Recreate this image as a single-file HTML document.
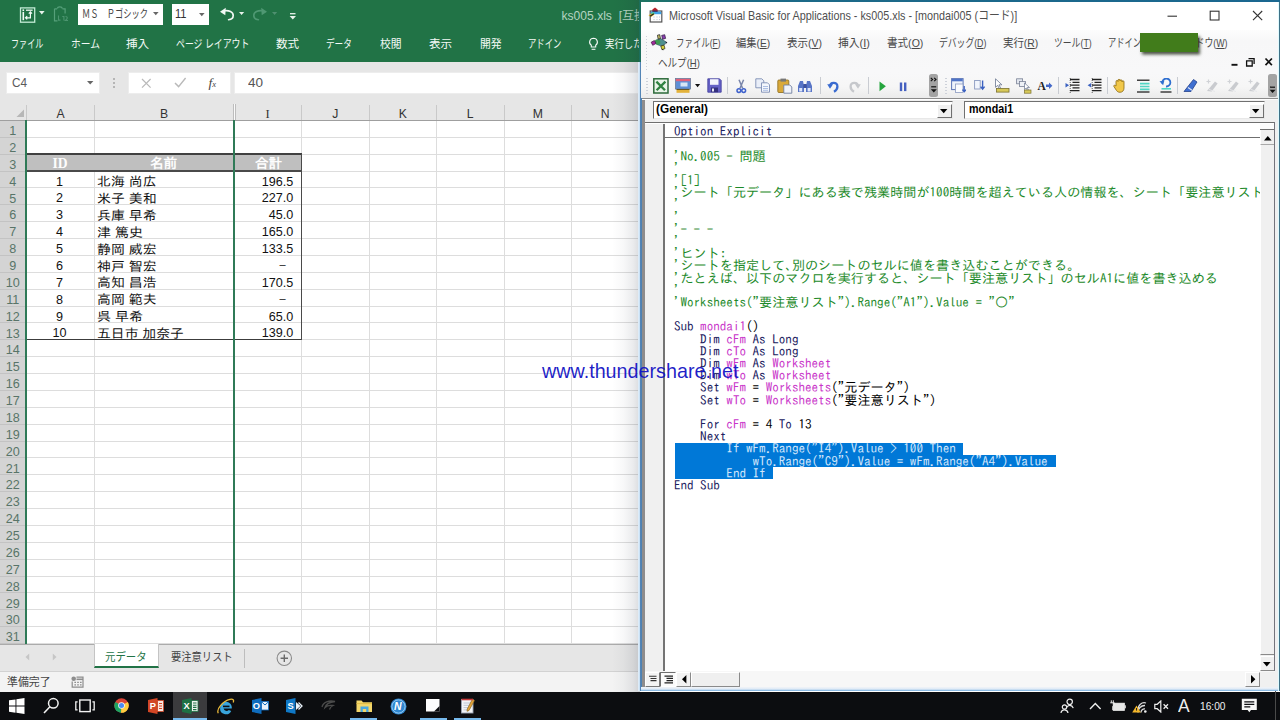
<!DOCTYPE html>
<html lang="ja">
<head>
<meta charset="utf-8">
<title>ks005.xls - Excel / Microsoft Visual Basic for Applications</title>
<style>
html,body{margin:0;padding:0;background:#fff;}
#s{position:relative;width:1280px;height:720px;overflow:hidden;background:#fff;font-family:'Liberation Sans','Noto Sans CJK JP',sans-serif;}
.a{position:absolute;display:block;box-sizing:border-box;}
.t{white-space:pre;}
.cl{position:absolute;left:673.9px;white-space:pre;font-family:'IPAGothic','Liberation Mono',monospace;font-size:13.12px;line-height:12.2px;height:12.2px;color:#000;}
.k{color:#20205e}.i{color:#c935c9}.c{color:#1d8a2a}.s{color:#d2e6fb}
u{text-decoration:underline;text-underline-offset:1px;}
</style>
</head>
<body>
<div id="s">
<!-- Excel window -->
<div class="a" style="left:0px;top:0px;width:640px;height:62px;background:#217346;"></div>
<svg class="a" style="left:19px;top:6.5px;" width="17" height="17" viewBox="0 0 17 17"><rect x="1.500" y=".9" width="14.200" height="14.300" fill="none" stroke="#c4ecd6" stroke-width="1.300"/><rect x="3.500" y="2.400" width="1.600" height="1.600" fill="#f2fbf6"/><rect x="3.500" y="4.900" width="1.600" height="8.300" fill="#f2fbf6"/><path d="M7 3.200h6.600" stroke="#f2fbf6" stroke-width="1.300"/><path d="M11.400 5v5.800H6.600M9.800 6.600l1.600-1.700 1.600 1.700M8.200 9.200l-1.700 1.600 1.700 1.600" stroke="#f2fbf6" stroke-width="1.200" fill="none"/></svg>
<svg class="a" style="left:39px;top:11px;" width="6" height="4" viewBox="0 0 6 4"><path d="M0 0h5.6L2.8 3.4z" fill="#e9f3ec"/></svg>
<svg class="a" style="left:52.5px;top:6px;" width="16" height="16" viewBox="0 0 16 16"><path d="M1.500 2.800V14.800h3M1.500 2.800h2.600M4.500 2.600c0-2.400 4.600-2.400 4.600 0M9.500 2.800h2.600V7.500" fill="none" stroke="#56a07a" stroke-width="1.200"/><path d="M5.500 9.500v4.600h2M9.300 10.500h1.600v4M12.500 10.500c2.400 0 2.400 2 0 4h2.500" fill="none" stroke="#4c9570" stroke-width="1.100"/></svg>
<div class="a" style="left:78px;top:3.5px;width:85px;height:21.5px;background:#fff;"></div>
<span class="a t" style="top:7.03px;font-size:11.5px;line-height:14.95px;color:#444;font-family:'Liberation Sans','Noto Sans CJK JP',sans-serif;left:82px;transform-origin:0 50%;transform:scaleX(0.7174);">ＭＳ　Ｐゴシック</span>
<svg class="a" style="left:153.3px;top:11.8px;" width="6" height="4" viewBox="0 0 6 4"><path d="M0 0h5.6L2.8 3.2z" fill="#666"/></svg>
<div class="a" style="left:172px;top:3.5px;width:37px;height:21.5px;background:#fff;"></div>
<span class="a t" style="top:6.38px;font-size:12.5px;line-height:16.25px;color:#333;font-family:'Liberation Sans','Noto Sans CJK JP',sans-serif;left:175px;transform-origin:0 50%;transform:scaleX(0.8846);">11</span>
<svg class="a" style="left:198.5px;top:12.5px;" width="6" height="4" viewBox="0 0 6 4"><path d="M0 0h5.6L2.8 3.2z" fill="#666"/></svg>
<svg class="a" style="left:219px;top:6px;" width="16" height="16" viewBox="0 0 16 16"><path d="M5.600 4.700C9.800 4.200 14.200 5.800 14.200 9.500C14.200 12 12.200 13.500 9.600 13.700" fill="none" stroke="#f2f8f4" stroke-width="1.650" stroke-linecap="round"/><path d="M1 5.700L6.800 1.700L6.300 9.200z" fill="#f2f8f4"/></svg>
<svg class="a" style="left:239px;top:11.5px;" width="6" height="4" viewBox="0 0 6 4"><path d="M0 0h5.200L2.600 3z" fill="#e9f3ec"/></svg>
<svg class="a" style="left:252px;top:6px;" width="16" height="16" viewBox="0 0 16 16"><path d="M10.400 4.700C6.200 4.200 1.800 5.800 1.800 9.500C1.800 12 3.800 13.500 6.400 13.700" fill="none" stroke="#4f9873" stroke-width="1.650" stroke-linecap="round"/><path d="M15 5.700L9.200 1.700L9.700 9.200z" fill="#4f9873"/></svg>
<svg class="a" style="left:272px;top:11.5px;" width="6" height="4" viewBox="0 0 6 4"><path d="M0 0h5.200L2.600 3z" fill="#4f9070"/></svg>
<svg class="a" style="left:288.5px;top:12.6px;" width="8" height="8" viewBox="0 0 8 8"><path d="M1 0.700h5.500" stroke="#e9f3ec" stroke-width="1.300"/><path d="M0.600 3h6.400L3.800 6.600z" fill="#e9f3ec"/></svg>
<div class="a" style="left:555px;top:4px;width:85px;height:26px;overflow:hidden">
<span class="a t" style="top:5.13px;font-size:12.1px;line-height:15.73px;color:#b4d3c1;font-family:'Liberation Sans','Noto Sans CJK JP',sans-serif;left:6.5px;transform-origin:0 50%;">ks005.xls  [互換モード]  -  Excel</span>
</div>
<span class="a t" style="top:36.06px;font-size:11.6px;line-height:15.08px;color:#f4faf6;font-family:'Liberation Sans','Noto Sans CJK JP',sans-serif;left:11px;transform-origin:0 50%;transform:scaleX(0.6957);">ファイル</span>
<span class="a t" style="top:36.06px;font-size:11.6px;line-height:15.08px;color:#f4faf6;font-family:'Liberation Sans','Noto Sans CJK JP',sans-serif;left:71px;transform-origin:0 50%;transform:scaleX(0.8382);">ホーム</span>
<span class="a t" style="top:36.06px;font-size:11.6px;line-height:15.08px;color:#f4faf6;font-family:'Liberation Sans','Noto Sans CJK JP',sans-serif;left:126px;transform-origin:0 50%;transform:scaleX(1.0);">挿入</span>
<span class="a t" style="top:36.06px;font-size:11.6px;line-height:15.08px;color:#f4faf6;font-family:'Liberation Sans','Noto Sans CJK JP',sans-serif;left:176px;transform-origin:0 50%;transform:scaleX(0.7656);">ページ レイアウト</span>
<span class="a t" style="top:36.06px;font-size:11.6px;line-height:15.08px;color:#f4faf6;font-family:'Liberation Sans','Noto Sans CJK JP',sans-serif;left:276px;transform-origin:0 50%;transform:scaleX(1.0);">数式</span>
<span class="a t" style="top:36.06px;font-size:11.6px;line-height:15.08px;color:#f4faf6;font-family:'Liberation Sans','Noto Sans CJK JP',sans-serif;left:326px;transform-origin:0 50%;transform:scaleX(0.7429);">データ</span>
<span class="a t" style="top:36.06px;font-size:11.6px;line-height:15.08px;color:#f4faf6;font-family:'Liberation Sans','Noto Sans CJK JP',sans-serif;left:379.5px;transform-origin:0 50%;transform:scaleX(0.9348);">校閲</span>
<span class="a t" style="top:36.06px;font-size:11.6px;line-height:15.08px;color:#f4faf6;font-family:'Liberation Sans','Noto Sans CJK JP',sans-serif;left:429px;transform-origin:0 50%;transform:scaleX(1.0);">表示</span>
<span class="a t" style="top:36.06px;font-size:11.6px;line-height:15.08px;color:#f4faf6;font-family:'Liberation Sans','Noto Sans CJK JP',sans-serif;left:479.5px;transform-origin:0 50%;transform:scaleX(0.9348);">開発</span>
<span class="a t" style="top:36.06px;font-size:11.6px;line-height:15.08px;color:#f4faf6;font-family:'Liberation Sans','Noto Sans CJK JP',sans-serif;left:528px;transform-origin:0 50%;transform:scaleX(0.7174);">アドイン</span>
<svg class="a" style="left:587.5px;top:37px;" width="11" height="14" viewBox="0 0 11 14"><path d="M5.5 1.2a3.9 3.9 0 0 0-2.2 7.1v1.7h4.4V8.3A3.9 3.9 0 0 0 5.500 1.2z" fill="none" stroke="#f4faf6" stroke-width="1.1"/><path d="M3.6 12.3h3.8" stroke="#f4faf6" stroke-width="1.1"/></svg>
<div class="a" style="left:600px;top:32px;width:40px;height:24px;overflow:hidden">
<span class="a t" style="top:4.06px;font-size:11.6px;line-height:15.08px;color:#f4faf6;font-family:'Liberation Sans','Noto Sans CJK JP',sans-serif;left:5px;transform-origin:0 50%;transform:scaleX(0.8108);">実行したい作業を入力してください</span>
</div>
<div class="a" style="left:0px;top:62px;width:640px;height:58.6px;background:#e6e6e6;"></div>
<div class="a" style="left:5.5px;top:71.6px;width:94px;height:22.9px;background:#fff;box-shadow:inset 0 0 0 1px #ededed;"></div>
<span class="a t" style="top:75.41px;font-size:12.6px;line-height:16.38px;color:#5a5a5a;font-family:'Liberation Sans','Noto Sans CJK JP',sans-serif;left:11.5px;transform-origin:0 50%;transform:scaleX(0.9375);">C4</span>
<svg class="a" style="left:87px;top:81px;" width="7" height="5" viewBox="0 0 7 5"><path d="M0 0h6.4L3.2 3.6z" fill="#666"/></svg>
<div class="a" style="left:113.3px;top:78px;width:1.5px;height:1.5px;background:#b5b5b5;"></div>
<div class="a" style="left:113.3px;top:82px;width:1.5px;height:1.5px;background:#b5b5b5;"></div>
<div class="a" style="left:113.3px;top:86px;width:1.5px;height:1.5px;background:#b5b5b5;"></div>
<div class="a" style="left:128px;top:71.6px;width:103px;height:22.9px;background:#fff;box-shadow:inset 0 0 0 1px #ededed;"></div>
<svg class="a" style="left:141px;top:77.5px;" width="11" height="11" viewBox="0 0 11 11"><path d="M1 1l8.6 8.6M9.6 1L1 9.600" stroke="#b9b9b9" stroke-width="1.2" fill="none"/></svg>
<svg class="a" style="left:174px;top:77px;" width="13" height="11" viewBox="0 0 13 11"><path d="M1 6l3.600 3.6L11.6 1" stroke="#b9b9b9" stroke-width="1.4" fill="none"/></svg>
<span class="a t" style="top:73.82px;font-size:13.5px;line-height:17.55px;color:#444;font-family:'Liberation Serif','Noto Serif CJK JP',serif;left:208.5px;transform-origin:0 50%;"><i>f</i><span style="font-size:8.5px"><i>x</i></span></span>
<div class="a" style="left:234px;top:71.6px;width:410px;height:22.9px;background:#fff;box-shadow:inset 0 0 0 1px #ededed;"></div>
<span class="a t" style="top:75.11px;font-size:12.6px;line-height:16.38px;color:#555;font-family:'Liberation Sans','Noto Sans CJK JP',sans-serif;left:248px;transform-origin:0 50%;transform:scaleX(1.0714);">40</span>
<div class="a" style="left:0px;top:120.4px;width:640px;height:524.12px;background:#fff;"></div>
<span class="a t" style="top:106.67px;font-size:12.2px;line-height:15.86px;color:#333;font-family:'Liberation Sans','IPAGothic',sans-serif;left:60.7px;transform-origin:50% 50%;transform:translateX(-50%);">A</span>
<div class="a" style="left:93.9px;top:104.5px;width:1px;height:16px;background:#c9c9c9;"></div>
<span class="a t" style="top:106.67px;font-size:12.2px;line-height:15.86px;color:#333;font-family:'Liberation Sans','IPAGothic',sans-serif;left:164.1px;transform-origin:50% 50%;transform:translateX(-50%);">B</span>
<span class="a t" style="top:106.41px;font-size:12.6px;line-height:16.38px;color:#333;font-family:'Liberation Serif','Noto Serif CJK JP',serif;left:267.6px;transform-origin:50% 50%;transform:translateX(-50%);">I</span>
<div class="a" style="left:301.0px;top:104.5px;width:1px;height:16px;background:#c9c9c9;"></div>
<span class="a t" style="top:106.67px;font-size:12.2px;line-height:15.86px;color:#333;font-family:'Liberation Sans','IPAGothic',sans-serif;left:335.2px;transform-origin:50% 50%;transform:translateX(-50%);">J</span>
<div class="a" style="left:368.5px;top:104.5px;width:1px;height:16px;background:#c9c9c9;"></div>
<span class="a t" style="top:106.67px;font-size:12.2px;line-height:15.86px;color:#333;font-family:'Liberation Sans','IPAGothic',sans-serif;left:402.8px;transform-origin:50% 50%;transform:translateX(-50%);">K</span>
<div class="a" style="left:436.0px;top:104.5px;width:1px;height:16px;background:#c9c9c9;"></div>
<span class="a t" style="top:106.67px;font-size:12.2px;line-height:15.86px;color:#333;font-family:'Liberation Sans','IPAGothic',sans-serif;left:470.2px;transform-origin:50% 50%;transform:translateX(-50%);">L</span>
<div class="a" style="left:503.5px;top:104.5px;width:1px;height:16px;background:#c9c9c9;"></div>
<span class="a t" style="top:106.67px;font-size:12.2px;line-height:15.86px;color:#333;font-family:'Liberation Sans','IPAGothic',sans-serif;left:537.8px;transform-origin:50% 50%;transform:translateX(-50%);">M</span>
<div class="a" style="left:571.0px;top:104.5px;width:1px;height:16px;background:#c9c9c9;"></div>
<span class="a t" style="top:106.67px;font-size:12.2px;line-height:15.86px;color:#333;font-family:'Liberation Sans','IPAGothic',sans-serif;left:605.2px;transform-origin:50% 50%;transform:translateX(-50%);">N</span>
<div class="a" style="left:638.5px;top:104.5px;width:1px;height:16px;background:#c9c9c9;"></div>
<div class="a" style="left:26px;top:104.5px;width:1px;height:16px;background:#c9c9c9;"></div>
<div class="a" style="left:232.5px;top:104px;width:3px;height:16.4px;background:#fafafa;border-left:1px solid #bdbdbd;border-right:1px solid #bdbdbd;"></div>
<svg class="a" style="left:15.5px;top:108.5px;" width="9" height="9" viewBox="0 0 9 9"><path d="M8 0.5V8H0.500z" fill="#b7b7b7"/></svg>
<div class="a" style="left:93.9px;top:120.4px;width:1px;height:523.12px;background:#dddddd;"></div>
<div class="a" style="left:301.0px;top:120.4px;width:1px;height:523.12px;background:#dddddd;"></div>
<div class="a" style="left:368.5px;top:120.4px;width:1px;height:523.12px;background:#dddddd;"></div>
<div class="a" style="left:436.0px;top:120.4px;width:1px;height:523.12px;background:#dddddd;"></div>
<div class="a" style="left:503.5px;top:120.4px;width:1px;height:523.12px;background:#dddddd;"></div>
<div class="a" style="left:571.0px;top:120.4px;width:1px;height:523.12px;background:#dddddd;"></div>
<div class="a" style="left:0px;top:120.4px;width:25.6px;height:523.73px;background:#d4d4d4;"></div>
<div class="a" style="left:25.6px;top:136.78px;width:615px;height:1px;background:#dddddd;"></div>
<div class="a" style="left:0px;top:136.78px;width:25.6px;height:1px;background:#c3c3c3;"></div>
<span class="a t" style="top:123.05px;font-size:12.6px;line-height:16.38px;color:#587468;font-family:'Liberation Sans','IPAGothic',sans-serif;left:12.8px;transform-origin:50% 50%;transform:translateX(-50%);">1</span>
<div class="a" style="left:25.6px;top:153.65px;width:615px;height:1px;background:#dddddd;"></div>
<div class="a" style="left:0px;top:153.65px;width:25.6px;height:1px;background:#c3c3c3;"></div>
<span class="a t" style="top:139.92px;font-size:12.6px;line-height:16.38px;color:#587468;font-family:'Liberation Sans','IPAGothic',sans-serif;left:12.8px;transform-origin:50% 50%;transform:translateX(-50%);">2</span>
<div class="a" style="left:25.6px;top:170.53px;width:615px;height:1px;background:#dddddd;"></div>
<div class="a" style="left:0px;top:170.53px;width:25.6px;height:1px;background:#c3c3c3;"></div>
<span class="a t" style="top:156.8px;font-size:12.6px;line-height:16.38px;color:#587468;font-family:'Liberation Sans','IPAGothic',sans-serif;left:12.8px;transform-origin:50% 50%;transform:translateX(-50%);">3</span>
<div class="a" style="left:25.6px;top:187.4px;width:615px;height:1px;background:#dddddd;"></div>
<div class="a" style="left:0px;top:187.4px;width:25.6px;height:1px;background:#c3c3c3;"></div>
<span class="a t" style="top:173.67px;font-size:12.6px;line-height:16.38px;color:#587468;font-family:'Liberation Sans','IPAGothic',sans-serif;left:12.8px;transform-origin:50% 50%;transform:translateX(-50%);">4</span>
<div class="a" style="left:25.6px;top:204.28px;width:615px;height:1px;background:#dddddd;"></div>
<div class="a" style="left:0px;top:204.28px;width:25.6px;height:1px;background:#c3c3c3;"></div>
<span class="a t" style="top:190.55px;font-size:12.6px;line-height:16.38px;color:#587468;font-family:'Liberation Sans','IPAGothic',sans-serif;left:12.8px;transform-origin:50% 50%;transform:translateX(-50%);">5</span>
<div class="a" style="left:25.6px;top:221.15px;width:615px;height:1px;background:#dddddd;"></div>
<div class="a" style="left:0px;top:221.15px;width:25.6px;height:1px;background:#c3c3c3;"></div>
<span class="a t" style="top:207.42px;font-size:12.6px;line-height:16.38px;color:#587468;font-family:'Liberation Sans','IPAGothic',sans-serif;left:12.8px;transform-origin:50% 50%;transform:translateX(-50%);">6</span>
<div class="a" style="left:25.6px;top:238.03px;width:615px;height:1px;background:#dddddd;"></div>
<div class="a" style="left:0px;top:238.03px;width:25.6px;height:1px;background:#c3c3c3;"></div>
<span class="a t" style="top:224.3px;font-size:12.6px;line-height:16.38px;color:#587468;font-family:'Liberation Sans','IPAGothic',sans-serif;left:12.8px;transform-origin:50% 50%;transform:translateX(-50%);">7</span>
<div class="a" style="left:25.6px;top:254.9px;width:615px;height:1px;background:#dddddd;"></div>
<div class="a" style="left:0px;top:254.9px;width:25.6px;height:1px;background:#c3c3c3;"></div>
<span class="a t" style="top:241.17px;font-size:12.6px;line-height:16.38px;color:#587468;font-family:'Liberation Sans','IPAGothic',sans-serif;left:12.8px;transform-origin:50% 50%;transform:translateX(-50%);">8</span>
<div class="a" style="left:25.6px;top:271.77px;width:615px;height:1px;background:#dddddd;"></div>
<div class="a" style="left:0px;top:271.77px;width:25.6px;height:1px;background:#c3c3c3;"></div>
<span class="a t" style="top:258.05px;font-size:12.6px;line-height:16.38px;color:#587468;font-family:'Liberation Sans','IPAGothic',sans-serif;left:12.8px;transform-origin:50% 50%;transform:translateX(-50%);">9</span>
<div class="a" style="left:25.6px;top:288.65px;width:615px;height:1px;background:#dddddd;"></div>
<div class="a" style="left:0px;top:288.65px;width:25.6px;height:1px;background:#c3c3c3;"></div>
<span class="a t" style="top:274.92px;font-size:12.6px;line-height:16.38px;color:#587468;font-family:'Liberation Sans','IPAGothic',sans-serif;left:12.8px;transform-origin:50% 50%;transform:translateX(-50%);">10</span>
<div class="a" style="left:25.6px;top:305.52px;width:615px;height:1px;background:#dddddd;"></div>
<div class="a" style="left:0px;top:305.52px;width:25.6px;height:1px;background:#c3c3c3;"></div>
<span class="a t" style="top:291.8px;font-size:12.6px;line-height:16.38px;color:#587468;font-family:'Liberation Sans','IPAGothic',sans-serif;left:12.8px;transform-origin:50% 50%;transform:translateX(-50%);">11</span>
<div class="a" style="left:25.6px;top:322.4px;width:615px;height:1px;background:#dddddd;"></div>
<div class="a" style="left:0px;top:322.4px;width:25.6px;height:1px;background:#c3c3c3;"></div>
<span class="a t" style="top:308.67px;font-size:12.6px;line-height:16.38px;color:#587468;font-family:'Liberation Sans','IPAGothic',sans-serif;left:12.8px;transform-origin:50% 50%;transform:translateX(-50%);">12</span>
<div class="a" style="left:25.6px;top:339.27px;width:615px;height:1px;background:#dddddd;"></div>
<div class="a" style="left:0px;top:339.27px;width:25.6px;height:1px;background:#c3c3c3;"></div>
<span class="a t" style="top:325.55px;font-size:12.6px;line-height:16.38px;color:#587468;font-family:'Liberation Sans','IPAGothic',sans-serif;left:12.8px;transform-origin:50% 50%;transform:translateX(-50%);">13</span>
<div class="a" style="left:25.6px;top:356.15px;width:615px;height:1px;background:#dddddd;"></div>
<div class="a" style="left:0px;top:356.15px;width:25.6px;height:1px;background:#c3c3c3;"></div>
<span class="a t" style="top:342.42px;font-size:12.6px;line-height:16.38px;color:#587468;font-family:'Liberation Sans','IPAGothic',sans-serif;left:12.8px;transform-origin:50% 50%;transform:translateX(-50%);">14</span>
<div class="a" style="left:25.6px;top:373.02px;width:615px;height:1px;background:#dddddd;"></div>
<div class="a" style="left:0px;top:373.02px;width:25.6px;height:1px;background:#c3c3c3;"></div>
<span class="a t" style="top:359.3px;font-size:12.6px;line-height:16.38px;color:#587468;font-family:'Liberation Sans','IPAGothic',sans-serif;left:12.8px;transform-origin:50% 50%;transform:translateX(-50%);">15</span>
<div class="a" style="left:25.6px;top:389.9px;width:615px;height:1px;background:#dddddd;"></div>
<div class="a" style="left:0px;top:389.9px;width:25.6px;height:1px;background:#c3c3c3;"></div>
<span class="a t" style="top:376.17px;font-size:12.6px;line-height:16.38px;color:#587468;font-family:'Liberation Sans','IPAGothic',sans-serif;left:12.8px;transform-origin:50% 50%;transform:translateX(-50%);">16</span>
<div class="a" style="left:25.6px;top:406.77px;width:615px;height:1px;background:#dddddd;"></div>
<div class="a" style="left:0px;top:406.77px;width:25.6px;height:1px;background:#c3c3c3;"></div>
<span class="a t" style="top:393.05px;font-size:12.6px;line-height:16.38px;color:#587468;font-family:'Liberation Sans','IPAGothic',sans-serif;left:12.8px;transform-origin:50% 50%;transform:translateX(-50%);">17</span>
<div class="a" style="left:25.6px;top:423.65px;width:615px;height:1px;background:#dddddd;"></div>
<div class="a" style="left:0px;top:423.65px;width:25.6px;height:1px;background:#c3c3c3;"></div>
<span class="a t" style="top:409.92px;font-size:12.6px;line-height:16.38px;color:#587468;font-family:'Liberation Sans','IPAGothic',sans-serif;left:12.8px;transform-origin:50% 50%;transform:translateX(-50%);">18</span>
<div class="a" style="left:25.6px;top:440.52px;width:615px;height:1px;background:#dddddd;"></div>
<div class="a" style="left:0px;top:440.52px;width:25.6px;height:1px;background:#c3c3c3;"></div>
<span class="a t" style="top:426.8px;font-size:12.6px;line-height:16.38px;color:#587468;font-family:'Liberation Sans','IPAGothic',sans-serif;left:12.8px;transform-origin:50% 50%;transform:translateX(-50%);">19</span>
<div class="a" style="left:25.6px;top:457.4px;width:615px;height:1px;background:#dddddd;"></div>
<div class="a" style="left:0px;top:457.4px;width:25.6px;height:1px;background:#c3c3c3;"></div>
<span class="a t" style="top:443.67px;font-size:12.6px;line-height:16.38px;color:#587468;font-family:'Liberation Sans','IPAGothic',sans-serif;left:12.8px;transform-origin:50% 50%;transform:translateX(-50%);">20</span>
<div class="a" style="left:25.6px;top:474.27px;width:615px;height:1px;background:#dddddd;"></div>
<div class="a" style="left:0px;top:474.27px;width:25.6px;height:1px;background:#c3c3c3;"></div>
<span class="a t" style="top:460.55px;font-size:12.6px;line-height:16.38px;color:#587468;font-family:'Liberation Sans','IPAGothic',sans-serif;left:12.8px;transform-origin:50% 50%;transform:translateX(-50%);">21</span>
<div class="a" style="left:25.6px;top:491.15px;width:615px;height:1px;background:#dddddd;"></div>
<div class="a" style="left:0px;top:491.15px;width:25.6px;height:1px;background:#c3c3c3;"></div>
<span class="a t" style="top:477.42px;font-size:12.6px;line-height:16.38px;color:#587468;font-family:'Liberation Sans','IPAGothic',sans-serif;left:12.8px;transform-origin:50% 50%;transform:translateX(-50%);">22</span>
<div class="a" style="left:25.6px;top:508.02px;width:615px;height:1px;background:#dddddd;"></div>
<div class="a" style="left:0px;top:508.02px;width:25.6px;height:1px;background:#c3c3c3;"></div>
<span class="a t" style="top:494.3px;font-size:12.6px;line-height:16.38px;color:#587468;font-family:'Liberation Sans','IPAGothic',sans-serif;left:12.8px;transform-origin:50% 50%;transform:translateX(-50%);">23</span>
<div class="a" style="left:25.6px;top:524.9px;width:615px;height:1px;background:#dddddd;"></div>
<div class="a" style="left:0px;top:524.9px;width:25.6px;height:1px;background:#c3c3c3;"></div>
<span class="a t" style="top:511.17px;font-size:12.6px;line-height:16.38px;color:#587468;font-family:'Liberation Sans','IPAGothic',sans-serif;left:12.8px;transform-origin:50% 50%;transform:translateX(-50%);">24</span>
<div class="a" style="left:25.6px;top:541.77px;width:615px;height:1px;background:#dddddd;"></div>
<div class="a" style="left:0px;top:541.77px;width:25.6px;height:1px;background:#c3c3c3;"></div>
<span class="a t" style="top:528.05px;font-size:12.6px;line-height:16.38px;color:#587468;font-family:'Liberation Sans','IPAGothic',sans-serif;left:12.8px;transform-origin:50% 50%;transform:translateX(-50%);">25</span>
<div class="a" style="left:25.6px;top:558.65px;width:615px;height:1px;background:#dddddd;"></div>
<div class="a" style="left:0px;top:558.65px;width:25.6px;height:1px;background:#c3c3c3;"></div>
<span class="a t" style="top:544.92px;font-size:12.6px;line-height:16.38px;color:#587468;font-family:'Liberation Sans','IPAGothic',sans-serif;left:12.8px;transform-origin:50% 50%;transform:translateX(-50%);">26</span>
<div class="a" style="left:25.6px;top:575.52px;width:615px;height:1px;background:#dddddd;"></div>
<div class="a" style="left:0px;top:575.52px;width:25.6px;height:1px;background:#c3c3c3;"></div>
<span class="a t" style="top:561.8px;font-size:12.6px;line-height:16.38px;color:#587468;font-family:'Liberation Sans','IPAGothic',sans-serif;left:12.8px;transform-origin:50% 50%;transform:translateX(-50%);">27</span>
<div class="a" style="left:25.6px;top:592.4px;width:615px;height:1px;background:#dddddd;"></div>
<div class="a" style="left:0px;top:592.4px;width:25.6px;height:1px;background:#c3c3c3;"></div>
<span class="a t" style="top:578.67px;font-size:12.6px;line-height:16.38px;color:#587468;font-family:'Liberation Sans','IPAGothic',sans-serif;left:12.8px;transform-origin:50% 50%;transform:translateX(-50%);">28</span>
<div class="a" style="left:25.6px;top:609.27px;width:615px;height:1px;background:#dddddd;"></div>
<div class="a" style="left:0px;top:609.27px;width:25.6px;height:1px;background:#c3c3c3;"></div>
<span class="a t" style="top:595.55px;font-size:12.6px;line-height:16.38px;color:#587468;font-family:'Liberation Sans','IPAGothic',sans-serif;left:12.8px;transform-origin:50% 50%;transform:translateX(-50%);">29</span>
<div class="a" style="left:25.6px;top:626.15px;width:615px;height:1px;background:#dddddd;"></div>
<div class="a" style="left:0px;top:626.15px;width:25.6px;height:1px;background:#c3c3c3;"></div>
<span class="a t" style="top:612.42px;font-size:12.6px;line-height:16.38px;color:#587468;font-family:'Liberation Sans','IPAGothic',sans-serif;left:12.8px;transform-origin:50% 50%;transform:translateX(-50%);">30</span>
<div class="a" style="left:25.6px;top:643.02px;width:615px;height:1px;background:#dddddd;"></div>
<div class="a" style="left:0px;top:643.02px;width:25.6px;height:1px;background:#c3c3c3;"></div>
<span class="a t" style="top:629.3px;font-size:12.6px;line-height:16.38px;color:#587468;font-family:'Liberation Sans','IPAGothic',sans-serif;left:12.8px;transform-origin:50% 50%;transform:translateX(-50%);">31</span>
<div class="a" style="left:0px;top:119.8px;width:640px;height:1.2px;background:#9f9f9f;"></div>
<div class="a" style="left:26.5px;top:154.15px;width:275.3px;height:16.875px;background:#bfbfbf;"></div>
<div class="a" style="left:26.5px;top:153.45px;width:275.8px;height:1.4px;background:#404040;"></div>
<div class="a" style="left:26.5px;top:170.22px;width:275.8px;height:1.4px;background:#4a4a4a;"></div>
<div class="a" style="left:26.5px;top:338.87px;width:275.8px;height:1.5px;background:#3c3c3c;"></div>
<div class="a" style="left:300.8px;top:154.15px;width:1.4px;height:185.62px;background:#4a4a4a;"></div>
<span class="a t" style="top:154.55px;font-size:13.6px;line-height:17.68px;color:#fdfdfd;font-family:'Liberation Serif','Noto Serif CJK JP',serif;font-weight:bold;left:60px;transform-origin:50% 50%;transform:translateX(-50%);">ID</span>
<span class="a t" style="top:154.55px;font-size:13.6px;line-height:17.68px;color:#fdfdfd;font-family:'Liberation Sans','IPAGothic',sans-serif;font-weight:bold;left:163.5px;transform-origin:50% 50%;transform:translateX(-50%);">名前</span>
<span class="a t" style="top:154.55px;font-size:13.6px;line-height:17.68px;color:#fdfdfd;font-family:'Liberation Sans','IPAGothic',sans-serif;font-weight:bold;left:268.5px;transform-origin:50% 50%;transform:translateX(-50%);">合計</span>
<span class="a t" style="top:173.57px;font-size:12.6px;line-height:16.38px;color:#111;font-family:'Liberation Sans','IPAGothic',sans-serif;left:59.5px;transform-origin:50% 50%;transform:translateX(-50%);">1</span>
<span class="a t" style="top:174.18px;font-size:12.9px;line-height:16.77px;color:#111;font-family:'Liberation Sans','IPAGothic',sans-serif;left:96.6px;transform-origin:0 50%;transform:scaleX(1.08);">北海 尚広</span>
<span class="a t" style="top:173.57px;font-size:12.6px;line-height:16.38px;color:#111;font-family:'Liberation Sans','IPAGothic',sans-serif;left:293.3px;transform-origin:100% 50%;transform:translateX(-100%);">196.5</span>
<span class="a t" style="top:190.45px;font-size:12.6px;line-height:16.38px;color:#111;font-family:'Liberation Sans','IPAGothic',sans-serif;left:59.5px;transform-origin:50% 50%;transform:translateX(-50%);">2</span>
<span class="a t" style="top:191.06px;font-size:12.9px;line-height:16.77px;color:#111;font-family:'Liberation Sans','IPAGothic',sans-serif;left:96.6px;transform-origin:0 50%;transform:scaleX(1.08);">米子 美和</span>
<span class="a t" style="top:190.45px;font-size:12.6px;line-height:16.38px;color:#111;font-family:'Liberation Sans','IPAGothic',sans-serif;left:293.3px;transform-origin:100% 50%;transform:translateX(-100%);">227.0</span>
<span class="a t" style="top:207.32px;font-size:12.6px;line-height:16.38px;color:#111;font-family:'Liberation Sans','IPAGothic',sans-serif;left:59.5px;transform-origin:50% 50%;transform:translateX(-50%);">3</span>
<span class="a t" style="top:207.93px;font-size:12.9px;line-height:16.77px;color:#111;font-family:'Liberation Sans','IPAGothic',sans-serif;left:96.6px;transform-origin:0 50%;transform:scaleX(1.08);">兵庫 早希</span>
<span class="a t" style="top:207.32px;font-size:12.6px;line-height:16.38px;color:#111;font-family:'Liberation Sans','IPAGothic',sans-serif;left:293.3px;transform-origin:100% 50%;transform:translateX(-100%);">45.0</span>
<span class="a t" style="top:224.2px;font-size:12.6px;line-height:16.38px;color:#111;font-family:'Liberation Sans','IPAGothic',sans-serif;left:59.5px;transform-origin:50% 50%;transform:translateX(-50%);">4</span>
<span class="a t" style="top:224.81px;font-size:12.9px;line-height:16.77px;color:#111;font-family:'Liberation Sans','IPAGothic',sans-serif;left:96.6px;transform-origin:0 50%;transform:scaleX(1.0857);">津 篤史</span>
<span class="a t" style="top:224.2px;font-size:12.6px;line-height:16.38px;color:#111;font-family:'Liberation Sans','IPAGothic',sans-serif;left:293.3px;transform-origin:100% 50%;transform:translateX(-100%);">165.0</span>
<span class="a t" style="top:241.07px;font-size:12.6px;line-height:16.38px;color:#111;font-family:'Liberation Sans','IPAGothic',sans-serif;left:59.5px;transform-origin:50% 50%;transform:translateX(-50%);">5</span>
<span class="a t" style="top:241.68px;font-size:12.9px;line-height:16.77px;color:#111;font-family:'Liberation Sans','IPAGothic',sans-serif;left:96.6px;transform-origin:0 50%;transform:scaleX(1.08);">静岡 威宏</span>
<span class="a t" style="top:241.07px;font-size:12.6px;line-height:16.38px;color:#111;font-family:'Liberation Sans','IPAGothic',sans-serif;left:293.3px;transform-origin:100% 50%;transform:translateX(-100%);">133.5</span>
<span class="a t" style="top:257.95px;font-size:12.6px;line-height:16.38px;color:#111;font-family:'Liberation Sans','IPAGothic',sans-serif;left:59.5px;transform-origin:50% 50%;transform:translateX(-50%);">6</span>
<span class="a t" style="top:258.56px;font-size:12.9px;line-height:16.77px;color:#111;font-family:'Liberation Sans','IPAGothic',sans-serif;left:96.6px;transform-origin:0 50%;transform:scaleX(1.08);">神戸 智宏</span>
<span class="a t" style="top:256.89px;font-size:11px;line-height:14.3px;color:#111;font-family:'Liberation Sans','IPAGothic',sans-serif;left:285.6px;transform-origin:100% 50%;transform:translateX(-100%);">–</span>
<span class="a t" style="top:274.82px;font-size:12.6px;line-height:16.38px;color:#111;font-family:'Liberation Sans','IPAGothic',sans-serif;left:59.5px;transform-origin:50% 50%;transform:translateX(-50%);">7</span>
<span class="a t" style="top:275.43px;font-size:12.9px;line-height:16.77px;color:#111;font-family:'Liberation Sans','IPAGothic',sans-serif;left:96.6px;transform-origin:0 50%;transform:scaleX(1.08);">高知 昌浩</span>
<span class="a t" style="top:274.82px;font-size:12.6px;line-height:16.38px;color:#111;font-family:'Liberation Sans','IPAGothic',sans-serif;left:293.3px;transform-origin:100% 50%;transform:translateX(-100%);">170.5</span>
<span class="a t" style="top:291.7px;font-size:12.6px;line-height:16.38px;color:#111;font-family:'Liberation Sans','IPAGothic',sans-serif;left:59.5px;transform-origin:50% 50%;transform:translateX(-50%);">8</span>
<span class="a t" style="top:292.31px;font-size:12.9px;line-height:16.77px;color:#111;font-family:'Liberation Sans','IPAGothic',sans-serif;left:96.6px;transform-origin:0 50%;transform:scaleX(1.08);">高岡 範夫</span>
<span class="a t" style="top:290.64px;font-size:11px;line-height:14.3px;color:#111;font-family:'Liberation Sans','IPAGothic',sans-serif;left:285.6px;transform-origin:100% 50%;transform:translateX(-100%);">–</span>
<span class="a t" style="top:308.57px;font-size:12.6px;line-height:16.38px;color:#111;font-family:'Liberation Sans','IPAGothic',sans-serif;left:59.5px;transform-origin:50% 50%;transform:translateX(-50%);">9</span>
<span class="a t" style="top:309.18px;font-size:12.9px;line-height:16.77px;color:#111;font-family:'Liberation Sans','IPAGothic',sans-serif;left:96.6px;transform-origin:0 50%;transform:scaleX(1.0857);">呉 早希</span>
<span class="a t" style="top:308.57px;font-size:12.6px;line-height:16.38px;color:#111;font-family:'Liberation Sans','IPAGothic',sans-serif;left:293.3px;transform-origin:100% 50%;transform:translateX(-100%);">65.0</span>
<span class="a t" style="top:325.45px;font-size:12.6px;line-height:16.38px;color:#111;font-family:'Liberation Sans','IPAGothic',sans-serif;left:59.5px;transform-origin:50% 50%;transform:translateX(-50%);">10</span>
<span class="a t" style="top:326.06px;font-size:12.9px;line-height:16.77px;color:#111;font-family:'Liberation Sans','IPAGothic',sans-serif;left:96.6px;transform-origin:0 50%;transform:scaleX(1.0728);">五日市 加奈子</span>
<span class="a t" style="top:325.45px;font-size:12.6px;line-height:16.38px;color:#111;font-family:'Liberation Sans','IPAGothic',sans-serif;left:293.3px;transform-origin:100% 50%;transform:translateX(-100%);">139.0</span>
<div class="a" style="left:25.3px;top:120.4px;width:1.9px;height:523.73px;background:#2f7a57;"></div>
<div class="a" style="left:232.9px;top:120.4px;width:1.9px;height:523.73px;background:#2f7a57;"></div>
<div class="a" style="left:0px;top:644.0px;width:640px;height:27.0px;background:#e6e6e6;"></div>
<div class="a" style="left:0px;top:643.9px;width:640px;height:1.1px;background:#ababab;"></div>
<svg class="a" style="left:25px;top:653px;" width="5" height="8" viewBox="0 0 5 8"><path d="M4.2 0.500v7L0.500 4z" fill="#c6c6c6"/></svg>
<svg class="a" style="left:51.5px;top:653px;" width="5" height="8" viewBox="0 0 5 8"><path d="M0.800 0.500v7L4.500 4z" fill="#c6c6c6"/></svg>
<div class="a" style="left:94.4px;top:644.0px;width:64.4px;height:24.0px;background:#fff;border-bottom:2px solid #217346;border-left:1px solid #c4c4c4;border-right:1px solid #c4c4c4;"></div>
<span class="a t" style="top:649.63px;font-size:11.8px;line-height:15.34px;color:#217346;font-family:'Liberation Sans','Noto Sans CJK JP',sans-serif;left:105px;transform-origin:0 50%;transform:scaleX(0.883);">元データ</span>
<span class="a t" style="top:649.63px;font-size:11.8px;line-height:15.34px;color:#444;font-family:'Liberation Sans','Noto Sans CJK JP',sans-serif;left:170.6px;transform-origin:0 50%;transform:scaleX(0.8718);">要注意リスト</span>
<div class="a" style="left:244.3px;top:649px;width:1px;height:18.5px;background:#bdbdbd;"></div>
<svg class="a" style="left:275.5px;top:649.5px;" width="17" height="17" viewBox="0 0 17 17"><circle cx="8.300" cy="8.300" r="7.200" fill="none" stroke="#8a8a8a" stroke-width="1.1"/><path d="M4.600 8.300h7.400M8.300 4.600v7.400" stroke="#6a6a6a" stroke-width="1.4"/></svg>
<div class="a" style="left:0px;top:671px;width:640px;height:20.6px;background:#f3f3f3;"></div>
<div class="a" style="left:0px;top:670.6px;width:640px;height:1px;background:#d2d2d2;"></div>
<span class="a t" style="top:675.12px;font-size:10.9px;line-height:14.17px;color:#444;font-family:'Liberation Sans','Noto Sans CJK JP',sans-serif;left:7px;transform-origin:0 50%;transform:scaleX(1.0);">準備完了</span>
<svg class="a" style="left:70.5px;top:675.5px;" width="13" height="12" viewBox="0 0 13 12"><circle cx="2.700" cy="2.700" r="2.300" fill="#8d8d8d"/><path d="M5.500 1.200h6.500v10H1.200V5.500" fill="none" stroke="#8d8d8d" stroke-width="1.2"/><path d="M5.500 3.300h6.500" stroke="#8d8d8d" stroke-width="1.600"/><path d="M3.400 6.300h1.600M6.200 6.300h1.600M9 6.300h1.600M3.400 8.800h1.600M6.200 8.800h1.600M9 8.800h1.600" stroke="#8d8d8d" stroke-width="1.300"/></svg>
<div class="a" style="left:612px;top:0px;width:28px;height:691.6px;background:linear-gradient(90deg,rgba(30,40,60,0) 0,rgba(30,40,60,.03) 40%,rgba(30,40,60,.09) 75%,rgba(30,40,60,.17) 100%);"></div>
<!-- VBE window -->
<div class="a" style="left:639.4px;top:0px;width:640.6px;height:691.4px;background:#fff;"></div>
<div class="a" style="left:639.4px;top:0px;width:640.6px;height:1.8px;background:linear-gradient(90deg,#1e7560 0,#1c6a86 12%,#1a6790 100%);"></div>
<div class="a" style="left:639.4px;top:0px;width:1.7px;height:62px;background:#1c6e5c;"></div>
<div class="a" style="left:638.1px;top:62px;width:3.9px;height:629.4px;background:linear-gradient(90deg,#e6f0fa 0,#c0dcf3 50%,#5485b6 60%,#4d7fae 100%);"></div>
<div class="a" style="left:1277.7px;top:1.8px;width:2.3px;height:689.6px;background:linear-gradient(90deg,#dffaff 0,#dffaff 48%,#3f7186 56%,#3f7186 100%);"></div>
<svg class="a" style="left:648.2px;top:7px;" width="15" height="16" viewBox="0 0 15 16"><rect x="2.200" y="4" width="11.600" height="11" fill="#fdfdfd" stroke="#555" stroke-width="1.200"/><rect x="2.800" y="4.600" width="10.400" height="2.600" fill="#3da2e8"/><path d="M5.500 10h1M8.500 10h1M11 10h1M5.500 12.600h1M8.500 12.600h1M11 12.600h1" stroke="#b9c4d2" stroke-width="1"/><path d="M4.400 2.600L7 0.600l2.600 2v1.600H4.400z" fill="#b3202a"/><path d="M4.400 4.200h5.200" stroke="#2b2b6a" stroke-width="1.200"/><path d="M0.500 8.200l3.500-2.300 2.600 1.700-3.600 2.500z" fill="#d9b52f"/><path d="M2.800 6.600l2.300-1.500 1.700 1.100-2.300 1.500z" fill="#5fcf8a"/><path d="M2 9.300l3.800-2.600" stroke="#222" stroke-width="1.100"/></svg>
<span class="a t" style="top:8.14px;font-size:12.4px;line-height:16.12px;color:#4f4f4f;font-family:'Liberation Sans','Noto Sans CJK JP',sans-serif;left:668.5px;transform-origin:0 50%;transform:scaleX(0.8722);">Microsoft Visual Basic for Applications - ks005.xls - [mondai005 (コード)]</span>
<svg class="a" style="left:1167px;top:14.5px;" width="12" height="3" viewBox="0 0 12 3"><path d="M0.500 1.200h9.500" stroke="#333" stroke-width="1.100"/></svg>
<svg class="a" style="left:1209px;top:9.5px;" width="12" height="12" viewBox="0 0 12 12"><rect x="1.200" y="1.200" width="8.800" height="8.800" fill="none" stroke="#333" stroke-width="1.100"/></svg>
<svg class="a" style="left:1252px;top:9.5px;" width="12" height="12" viewBox="0 0 12 12"><path d="M1 1l9.200 9.200M10.200 1L1 10.200" stroke="#333" stroke-width="1.100"/></svg>
<div class="a" style="left:641.2px;top:29.5px;width:636.4px;height:43px;background:linear-gradient(180deg,#fdfdfd 0,#f7f7f8 25%,#f8f8f9 100%);"></div>
<div class="a" style="left:646.2px;top:36px;width:1.3px;height:1.3px;background:#cdd1d9;"></div>
<div class="a" style="left:646.2px;top:39px;width:1.3px;height:1.3px;background:#cdd1d9;"></div>
<div class="a" style="left:646.2px;top:42px;width:1.3px;height:1.3px;background:#cdd1d9;"></div>
<div class="a" style="left:646.2px;top:45px;width:1.3px;height:1.3px;background:#cdd1d9;"></div>
<div class="a" style="left:646.2px;top:48px;width:1.3px;height:1.3px;background:#cdd1d9;"></div>
<div class="a" style="left:646.2px;top:51px;width:1.3px;height:1.3px;background:#cdd1d9;"></div>
<div class="a" style="left:646.2px;top:54px;width:1.3px;height:1.3px;background:#cdd1d9;"></div>
<div class="a" style="left:646.2px;top:57px;width:1.3px;height:1.3px;background:#cdd1d9;"></div>
<div class="a" style="left:646.2px;top:60px;width:1.3px;height:1.3px;background:#cdd1d9;"></div>
<div class="a" style="left:646.2px;top:63px;width:1.3px;height:1.3px;background:#cdd1d9;"></div>
<div class="a" style="left:646.2px;top:66px;width:1.3px;height:1.3px;background:#cdd1d9;"></div>
<div class="a" style="left:646.2px;top:69px;width:1.3px;height:1.3px;background:#cdd1d9;"></div>
<svg class="a" style="left:650px;top:32.5px;" width="18" height="18" viewBox="0 0 18 18"><path d="M5.600 7.200l5.200-1.600 5.400 3.400-1.400 2.600-3.400 1.400-4.600-1.600z" fill="#4f8f90" stroke="#2a4a5a" stroke-width=".6"/><circle cx="7.600" cy="9.100" r="2.700" fill="#3f9c52"/><path d="M7.500 2.200l2.200-.5.700 3.800-2.200.6z" fill="#d9d26c" stroke="#1d1d1d" stroke-width=".8"/><path d="M11.700 2.400l3-.7.900 3.700-3 .9z" fill="#8a3fb2" stroke="#2a1638" stroke-width=".7"/><path d="M1.200 9.200l3.200-1.700 1.500 3-3.200 1.800z" fill="#a42c9c" stroke="#3a1140" stroke-width=".7"/><path d="M10.800 13l3.200-.8 1 3.400-3.100 1z" fill="#d8d43c" stroke="#2a2a10" stroke-width=".7"/><path d="M11.800 16.300l1.600-.4-.2 1.700z" fill="#111"/><path d="M15.600 8.600l1.700.7-1 1.500z" fill="#14142e"/></svg>
<span class="a t" style="top:35.06px;font-size:11.6px;line-height:15.08px;color:#484848;font-family:'Liberation Sans','Noto Sans CJK JP',sans-serif;left:675.6px;transform-origin:0 50%;transform:scaleX(0.7279);">ファイル(<u>F</u>)</span>
<span class="a t" style="top:35.06px;font-size:11.6px;line-height:15.08px;color:#484848;font-family:'Liberation Sans','Noto Sans CJK JP',sans-serif;left:736px;transform-origin:0 50%;transform:scaleX(0.8846);">編集(<u>E</u>)</span>
<span class="a t" style="top:35.06px;font-size:11.6px;line-height:15.08px;color:#484848;font-family:'Liberation Sans','Noto Sans CJK JP',sans-serif;left:786.7px;transform-origin:0 50%;transform:scaleX(0.9051);">表示(<u>V</u>)</span>
<span class="a t" style="top:35.06px;font-size:11.6px;line-height:15.08px;color:#484848;font-family:'Liberation Sans','Noto Sans CJK JP',sans-serif;left:838px;transform-origin:0 50%;transform:scaleX(0.9324);">挿入(<u>I</u>)</span>
<span class="a t" style="top:35.06px;font-size:11.6px;line-height:15.08px;color:#484848;font-family:'Liberation Sans','Noto Sans CJK JP',sans-serif;left:886.6px;transform-origin:0 50%;transform:scaleX(0.91);">書式(<u>O</u>)</span>
<span class="a t" style="top:35.06px;font-size:11.6px;line-height:15.08px;color:#484848;font-family:'Liberation Sans','Noto Sans CJK JP',sans-serif;left:939px;transform-origin:0 50%;transform:scaleX(0.7587);">デバッグ(<u>D</u>)</span>
<span class="a t" style="top:35.06px;font-size:11.6px;line-height:15.08px;color:#484848;font-family:'Liberation Sans','Noto Sans CJK JP',sans-serif;left:1003px;transform-origin:0 50%;transform:scaleX(0.8974);">実行(<u>R</u>)</span>
<span class="a t" style="top:35.06px;font-size:11.6px;line-height:15.08px;color:#484848;font-family:'Liberation Sans','Noto Sans CJK JP',sans-serif;left:1054.3px;transform-origin:0 50%;transform:scaleX(0.76);">ツール(<u>T</u>)</span>
<span class="a t" style="top:35.06px;font-size:11.6px;line-height:15.08px;color:#484848;font-family:'Liberation Sans','Noto Sans CJK JP',sans-serif;left:1108px;transform-origin:0 50%;transform:scaleX(0.7097);">アドイン(<u>A</u>)</span>
<span class="a t" style="top:35.06px;font-size:11.6px;line-height:15.08px;color:#484848;font-family:'Liberation Sans','Noto Sans CJK JP',sans-serif;left:1168.5px;transform-origin:0 50%;transform:scaleX(0.7636);">ウィンドウ(<u>W</u>)</span>
<span class="a t" style="top:54.76px;font-size:11.6px;line-height:15.08px;color:#484848;font-family:'Liberation Sans','Noto Sans CJK JP',sans-serif;left:658px;transform-origin:0 50%;transform:scaleX(0.8235);">ヘルプ(<u>H</u>)</span>
<div class="a" style="left:1140px;top:33px;width:58px;height:19px;background:#417c1b;box-shadow:2px 2.500px 3px rgba(20,30,10,.75);"></div>
<svg class="a" style="left:1230px;top:56px;" width="46" height="12" viewBox="0 0 46 12"><path d="M1.500 8.800h6" stroke="#111" stroke-width="1.900"/><path d="M18.500 2.600h5.600v5.400M16.600 4.800h5.600v5.200h-5.600z" fill="none" stroke="#111" stroke-width="1.300"/><path d="M35.500 2.500l6.400 6.600M41.900 2.500l-6.400 6.600" stroke="#111" stroke-width="1.700"/></svg>
<div class="a" style="left:641.2px;top:72.5px;width:636.4px;height:25.5px;background:linear-gradient(180deg,#f8f8f9 0,#f6f6f6 55%,#ebebeb 100%);"></div>
<div class="a" style="left:646.3px;top:78px;width:1.3px;height:1.3px;background:#cdd1d9;"></div>
<div class="a" style="left:945.3px;top:78px;width:1.3px;height:1.3px;background:#cdd1d9;"></div>
<div class="a" style="left:646.3px;top:81px;width:1.3px;height:1.3px;background:#cdd1d9;"></div>
<div class="a" style="left:945.3px;top:81px;width:1.3px;height:1.3px;background:#cdd1d9;"></div>
<div class="a" style="left:646.3px;top:84px;width:1.3px;height:1.3px;background:#cdd1d9;"></div>
<div class="a" style="left:945.3px;top:84px;width:1.3px;height:1.3px;background:#cdd1d9;"></div>
<div class="a" style="left:646.3px;top:87px;width:1.3px;height:1.3px;background:#cdd1d9;"></div>
<div class="a" style="left:945.3px;top:87px;width:1.3px;height:1.3px;background:#cdd1d9;"></div>
<div class="a" style="left:646.3px;top:90px;width:1.3px;height:1.3px;background:#cdd1d9;"></div>
<div class="a" style="left:945.3px;top:90px;width:1.3px;height:1.3px;background:#cdd1d9;"></div>
<div class="a" style="left:646.3px;top:93px;width:1.3px;height:1.3px;background:#cdd1d9;"></div>
<div class="a" style="left:945.3px;top:93px;width:1.3px;height:1.3px;background:#cdd1d9;"></div>
<svg class="a" style="left:652.8px;top:77.6px;" width="16" height="16" viewBox="0 0 16 16"><rect x=".8" y=".8" width="14.200" height="14.200" fill="#e9f4e9" stroke="#2c6a3a" stroke-width="1.500"/><path d="M3.400 3.600l8.600 8.600M12.400 3.600l-8.800 8.600" stroke="#2f8240" stroke-width="2.300"/></svg>
<svg class="a" style="left:674.5px;top:77.5px;" width="17" height="16" viewBox="0 0 17 16"><rect x=".5" y=".5" width="15" height="10.500" fill="#5d8fd6" stroke="#6a7a9a" stroke-width=".8"/><rect x=".9" y=".9" width="14.200" height="2.300" fill="#e2607a"/><rect x="5.500" y="4.500" width="7" height="4" fill="#d8e6f6"/><rect x="1.500" y="11.500" width="13" height="3.300" fill="#e3b23a"/><path d="M1.500 11.500h13" stroke="#5a4a1a" stroke-width=".9"/></svg>
<svg class="a" style="left:694.5px;top:84px;" width="6" height="4" viewBox="0 0 6 4"><path d="M0 0h5.200L2.600 3.200z" fill="#111"/></svg>
<svg class="a" style="left:706.5px;top:78px;" width="15" height="15" viewBox="0 0 15 15"><path d="M.8 .8h11.700l1.700 1.700v11.700H.8z" fill="#6561c6" stroke="#3f3b9a" stroke-width=".8"/><rect x="3" y="1.200" width="8.500" height="5.600" fill="#f4f4fc"/><rect x="4" y="9.500" width="7" height="4.700" fill="#35317e"/><rect x="5" y="10.500" width="2" height="3" fill="#e8e8f4"/></svg>
<div class="a" style="left:727px;top:77px;width:1px;height:17px;background:#c9ccd2;"></div>
<svg class="a" style="left:735.5px;top:78.5px;" width="11" height="15" viewBox="0 0 11 15"><path d="M3 .8l3.600 8.400M7.600 .8L4 9.200" stroke="#7a86aa" stroke-width="1.500" fill="none"/><circle cx="2.900" cy="11.600" r="1.900" fill="none" stroke="#3f62cc" stroke-width="1.500"/><circle cx="7.700" cy="11.600" r="1.900" fill="none" stroke="#3f62cc" stroke-width="1.500"/></svg>
<svg class="a" style="left:754.5px;top:78px;" width="16" height="15" viewBox="0 0 16 15"><path d="M.8 .8h6l2 2v7h-8z" fill="#e9eef8" stroke="#7d8db3" stroke-width=".9"/><path d="M6.500 4.800h6l2 2v7.400h-8z" fill="#f4f7fc" stroke="#7d8db3" stroke-width=".9"/><path d="M8 8.500h5M8 10.500h5M8 12.300h5" stroke="#9ab0dc" stroke-width=".8"/></svg>
<svg class="a" style="left:776.5px;top:77.5px;" width="16" height="16" viewBox="0 0 16 16"><rect x=".8" y="2" width="11" height="12.500" rx="1" fill="#d9a93a" stroke="#8a6a1a" stroke-width=".8"/><rect x="3.500" y=".6" width="5.500" height="3" fill="#777" /><path d="M6.800 7h6l2 2v6.200h-8z" fill="#f0f3fa" stroke="#70809f" stroke-width=".9"/></svg>
<svg class="a" style="left:797px;top:78px;" width="16" height="15" viewBox="0 0 16 15"><path d="M1 14V8l2-5h3l1 5v6zM9 14V8l1-5h3l2 5v6z" fill="#5875c6"/><rect x="6.300" y="6" width="3.400" height="4" fill="#3d52a0"/><rect x="2.200" y="10" width="3" height="3.500" fill="#dfe7fb"/><rect x="10.600" y="10" width="3" height="3.500" fill="#dfe7fb"/></svg>
<div class="a" style="left:819.5px;top:77px;width:1px;height:17px;background:#c9ccd2;"></div>
<svg class="a" style="left:826.5px;top:79.5px;" width="13" height="13" viewBox="0 0 13 13"><path d="M3 6.500C3 1.800 10.400 1.600 10.400 6.400C10.400 8.800 9 10.600 7 11.800" fill="none" stroke="#3a6bd0" stroke-width="2.300"/><path d="M0.200 4.300h5.800L3 8.700z" fill="#3a6bd0"/></svg>
<svg class="a" style="left:847.5px;top:79.5px;" width="13" height="13" viewBox="0 0 13 13"><path d="M10 6.500C10 1.800 2.600 1.600 2.600 6.400C2.600 8.800 4 10.600 6 11.800" fill="none" stroke="#c6c8cc" stroke-width="2.300"/><path d="M12.800 4.300H7L10 8.700z" fill="#c6c8cc"/></svg>
<div class="a" style="left:868px;top:77px;width:1px;height:17px;background:#c9ccd2;"></div>
<svg class="a" style="left:878.7px;top:81px;" width="8" height="11" viewBox="0 0 8 11"><path d="M.5 .4v9.800L6.900 5.300z" fill="#25a53e"/></svg>
<svg class="a" style="left:898.5px;top:81.5px;" width="9" height="10" viewBox="0 0 9 10"><rect x=".8" y=".5" width="2.400" height="8.600" fill="#4560c0"/><rect x="5" y=".5" width="2.400" height="8.600" fill="#4560c0"/></svg>
<div class="a" style="left:928.8px;top:74px;width:9.4px;height:23.2px;background:#a3a3a3;border-radius:2.500px;"></div>
<svg class="a" style="left:929.8px;top:76.5px;" width="8" height="19" viewBox="0 0 8 19"><path d="M.8 .8l1.800 1.700L.8 4.200M4.200 .8L6 2.500 4.200 4.200" stroke="#111" stroke-width="1.100" fill="none"/><path d="M1.200 9.800h5" stroke="#111" stroke-width="1.200"/><path d="M.8 12.300h6L3.800 15.600z" fill="#111"/></svg>
<div class="a" style="left:1268px;top:74px;width:9.4px;height:23.2px;background:#a3a3a3;border-radius:2.500px;"></div>
<svg class="a" style="left:1269.2px;top:85.5px;" width="8" height="9" viewBox="0 0 8 9"><path d="M1 1.200h5" stroke="#111" stroke-width="1.200"/><path d="M.6 3.800h6L3.600 7z" fill="#111"/></svg>
<svg class="a" style="left:951px;top:77.5px;" width="15" height="16" viewBox="0 0 15 16"><rect x=".6" y=".6" width="11.500" height="11" fill="#eef3fb" stroke="#5b76b8" stroke-width="1"/><rect x="1" y="1" width="10.700" height="2.300" fill="#4f74c8"/><rect x="4.500" y="6" width="7.500" height="8.500" fill="#fbfcfe" stroke="#8a9ac0" stroke-width=".8"/><path d="M13.200 8v5.200M11.400 11.600l1.800 2.200 1.800-2.200" stroke="#3b61c0" stroke-width="1.300" fill="none"/></svg>
<svg class="a" style="left:973.5px;top:79px;" width="12" height="13" viewBox="0 0 12 13"><rect x=".6" y="1.500" width="5.600" height="8.500" fill="#f1f5fc" stroke="#8a9ac0" stroke-width=".9"/><path d="M8.600 1.500v8M6.600 7.600l2 2.600 2-2.600" stroke="#3b61c0" stroke-width="1.400" fill="none"/></svg>
<svg class="a" style="left:993.5px;top:77.5px;" width="16" height="16" viewBox="0 0 16 16"><path d="M1.500 .8v8.500l2.200-2 1.600 3.500 1.300-.6-1.600-3.400h2.900z" fill="#fff" stroke="#6a7690" stroke-width=".8"/><rect x="2.500" y="10.500" width="12.500" height="3.600" fill="#d7c95a" stroke="#7a7030" stroke-width=".8"/></svg>
<svg class="a" style="left:1015.5px;top:77.5px;" width="16" height="16" viewBox="0 0 16 16"><rect x=".6" y=".8" width="6" height="5" fill="#e2e6ee" stroke="#7a8296" stroke-width=".8"/><rect x="3.500" y="3.500" width="6" height="5" fill="#eef1f6" stroke="#7a8296" stroke-width=".8"/><path d="M8.500 5v6.500l1.700-1.500 1.200 2.600 1-.5-1.200-2.600h2.300z" fill="#fff" stroke="#6a7690" stroke-width=".7"/><rect x="8.500" y="12" width="6.500" height="3.200" fill="#d7c95a" stroke="#7a7030" stroke-width=".7"/></svg>
<span class="a t" style="top:79.03px;font-size:11.5px;line-height:14.95px;color:#222;font-family:'Liberation Serif','Noto Serif CJK JP',serif;font-weight:bold;left:1037.5px;transform-origin:0 50%;">A</span>
<svg class="a" style="left:1045.5px;top:82px;" width="7" height="8" viewBox="0 0 7 8"><path d="M0 2.500h3V.6l3.400 3.200L3 7V5H0z" fill="#4468c8"/></svg>
<div class="a" style="left:1058px;top:77px;width:1px;height:17px;background:#c9ccd2;"></div>
<svg class="a" style="left:1064.5px;top:78px;" width="16" height="15" viewBox="0 0 16 15"><path d="M5 1.500h9.500M7.500 4.300h7M5 7.100h9.500M7.500 9.900h7M5 12.700h9.500" stroke="#222" stroke-width="1.300"/><path d="M.5 5l3.600 2.300L.5 9.600z" fill="#3b61c0"/><path d="M5.200 0v15" stroke="#222" stroke-width=".7" stroke-dasharray="1 1"/></svg>
<svg class="a" style="left:1086.5px;top:78px;" width="16" height="15" viewBox="0 0 16 15"><path d="M5 1.500h9.500M7.500 4.300h7M5 7.100h9.500M7.500 9.900h7M5 12.700h9.500" stroke="#222" stroke-width="1.300"/><path d="M4.200 5L.6 7.300l3.600 2.300z" fill="#3b61c0"/><path d="M5.200 0v15" stroke="#222" stroke-width=".7" stroke-dasharray="1 1"/></svg>
<div class="a" style="left:1107px;top:77px;width:1px;height:17px;background:#c9ccd2;"></div>
<svg class="a" style="left:1113px;top:78px;" width="14" height="15" viewBox="0 0 14 15"><path d="M3 8V3.500a1 1 0 0 1 2 0V2.300a1 1 0 0 1 2 0v.5a1 1 0 0 1 2 0v1a1 1 0 0 1 2 0V10c0 2.500-1.500 4.300-4 4.300S3.800 13 2.500 11L.8 8.300c-.4-.9.800-1.500 1.500-.7z" fill="#f1c84a" stroke="#8a6a14" stroke-width=".8"/></svg>
<svg class="a" style="left:1135.5px;top:78.5px;" width="15" height="14" viewBox="0 0 15 14"><path d="M1 1.200h12.500" stroke="#222" stroke-width="1.300"/><path d="M4 4.600h9.500M4 7.500h9.500M4 10.400h9.500" stroke="#4fd6c4" stroke-width="1.600"/><path d="M1 13h12.500" stroke="#222" stroke-width="1.300"/></svg>
<svg class="a" style="left:1157.5px;top:77.5px;" width="15" height="16" viewBox="0 0 15 16"><path d="M4.500 5.500a4 4 0 1 1 3.500 3" fill="none" stroke="#2f6fd0" stroke-width="1.800"/><path d="M1.500 3.200l4.800-.5-1.200 4.600z" fill="#2f6fd0"/><path d="M3.500 10.800h9.500" stroke="#4fd6c4" stroke-width="1.600"/><path d="M2.500 14h11" stroke="#222" stroke-width="1.300"/></svg>
<div class="a" style="left:1177px;top:77px;width:1px;height:17px;background:#c9ccd2;"></div>
<svg class="a" style="left:1183px;top:78px;" width="15" height="15" viewBox="0 0 15 15"><path d="M1 13.500L10.500 1.500l3.500 2.500-6 9.500z" fill="#3f6fd0" stroke="#23408a" stroke-width=".8"/><path d="M5 9.500l4 2.800" stroke="#dfe8fb" stroke-width="1.100"/></svg>
<svg class="a" style="left:1204.5px;top:78px;" width="15" height="15" viewBox="0 0 15 15"><path d="M2 13L10 3.500l2.600 2-6 8z" fill="#c9cbcf"/><path d="M1.500 3.500h4M3.500 1.500v4" stroke="#d0d2d6" stroke-width="1.200"/><path d="M4 11.500l6 2" stroke="#e6e7ea" stroke-width="1"/></svg>
<svg class="a" style="left:1225.5px;top:78px;" width="15" height="15" viewBox="0 0 15 15"><path d="M2 13L10 3.500l2.600 2-6 8z" fill="#c9cbcf"/><path d="M1.500 3.500h4M3.500 1.500v4" stroke="#d0d2d6" stroke-width="1.200"/><path d="M4 11.500l6 2" stroke="#e6e7ea" stroke-width="1"/></svg>
<svg class="a" style="left:1246.5px;top:78px;" width="15" height="15" viewBox="0 0 15 15"><path d="M2 13L10 3.500l2.600 2-6 8z" fill="#c9cbcf"/><path d="M1.500 3.500h4M3.500 1.500v4" stroke="#d0d2d6" stroke-width="1.200"/><path d="M4 11.500l6 2" stroke="#e6e7ea" stroke-width="1"/></svg>
<div class="a" style="left:642px;top:97.8px;width:635.7px;height:1.7px;background:#8b8b8b;"></div>
<div class="a" style="left:642px;top:99.5px;width:2.8px;height:587.5px;background:#8e8c8c;"></div>
<div class="a" style="left:644.8px;top:99.5px;width:632.9px;height:587.5px;background:#f0f0f0;"></div>
<div class="a" style="left:652.5px;top:101.3px;width:300.5px;height:17.6px;background:#fff;border:1.200px solid #707070;border-right-color:#e8e8e8;border-bottom-color:#e8e8e8;"></div>
<div class="a" style="left:936.8px;top:103.5px;width:15px;height:14.2px;background:#f0f0f0;border:1px solid #fff;border-right:1.300px solid #707070;border-bottom:1.300px solid #707070;"></div>
<svg class="a" style="left:940.4px;top:108.5px;" width="8" height="5" viewBox="0 0 8 5"><path d="M0 0h7.400L3.700 4.200z" fill="#000"/></svg>
<span class="a t" style="top:101.87px;font-size:12.2px;line-height:15.86px;color:#000;font-family:'Liberation Sans','Noto Sans CJK JP',sans-serif;font-weight:bold;left:655.5px;transform-origin:0 50%;transform:scaleX(0.9722);">(General)</span>
<div class="a" style="left:964.4px;top:101.3px;width:300.5px;height:17.6px;background:#fff;border:1.200px solid #707070;border-right-color:#e8e8e8;border-bottom-color:#e8e8e8;"></div>
<div class="a" style="left:1248.7px;top:103.5px;width:15px;height:14.2px;background:#f0f0f0;border:1px solid #fff;border-right:1.300px solid #707070;border-bottom:1.300px solid #707070;"></div>
<svg class="a" style="left:1252.3px;top:108.5px;" width="8" height="5" viewBox="0 0 8 5"><path d="M0 0h7.400L3.700 4.200z" fill="#000"/></svg>
<span class="a t" style="top:101.87px;font-size:12.2px;line-height:15.86px;color:#000;font-family:'Liberation Sans','Noto Sans CJK JP',sans-serif;font-weight:bold;left:968.5px;transform-origin:0 50%;transform:scaleX(0.88);">mondai1</span>
<div class="a" style="left:644.8px;top:122.3px;width:630.4px;height:548.9px;background:#fff;border-top:1.300px solid #6f6f6f;"></div>
<div class="a" style="left:644.8px;top:123.6px;width:18.5px;height:547.6px;background:#f0f0f0;"></div>
<div class="a" style="left:663.3px;top:123.6px;width:1.3px;height:547.6px;background:#747474;"></div>
<div class="a" style="left:1273.8px;top:122.3px;width:1.4px;height:565px;background:#74747c;"></div>
<div class="a" style="left:664.4px;top:136.8px;width:595.2px;height:1.1px;background:#6f6f6f;"></div>
<div class="a" style="left:1259.6px;top:123.6px;width:14.6px;height:547.6px;background:#f0f0f0;"></div>
<div class="a" style="left:1259.6px;top:123.6px;width:14.2px;height:5.6px;background:#fcfcfc;"></div>
<div class="a" style="left:1259.6px;top:129.2px;width:14.6px;height:1.2px;background:#707070;"></div>
<div class="a" style="left:1259.6px;top:130.4px;width:14.6px;height:14.3px;background:#f0f0f0;border-left:1px solid #fff;border-bottom:1.200px solid #a9a9a9;"></div>
<svg class="a" style="left:1263.5px;top:135.5px;" width="8" height="5" viewBox="0 0 8 5"><path d="M0 4.400h7.600L3.800 0z" fill="#000"/></svg>
<div class="a" style="left:1259.6px;top:145px;width:14.2px;height:509.5px;background:#f0f0f0;border-left:1px solid #fff;border-bottom:1.300px solid #8a8a8a;"></div>
<div class="a" style="left:1259.6px;top:656px;width:14.2px;height:15.2px;background:#f0f0f0;border-left:1px solid #fff;border-top:1px solid #fff;border-bottom:1.300px solid #8a8a8a;"></div>
<svg class="a" style="left:1263.3px;top:661.5px;" width="8" height="5" viewBox="0 0 8 5"><path d="M0 0h7.600L3.800 4.400z" fill="#000"/></svg>
<div class="a" style="left:644.8px;top:671.2px;width:630.4px;height:15.5px;background:#f7f7f7;"></div>
<div class="a" style="left:645px;top:671.8px;width:14.8px;height:14.8px;background:#f4f4f4;border:1px solid #fff;border-right:1.300px solid #7a7a7a;border-bottom:1.300px solid #7a7a7a;"></div>
<svg class="a" style="left:648px;top:674.5px;" width="9" height="8" viewBox="0 0 9 8"><path d="M1 1.200h7.500M2.500 3.500h6M2.500 5.600h6" stroke="#333" stroke-width="1.100"/></svg>
<div class="a" style="left:660.4px;top:671.8px;width:15.2px;height:14.8px;background:#fbfbfb;border:1.300px solid #6f6f6f;border-right:1px solid #fff;border-bottom:1px solid #fff;"></div>
<svg class="a" style="left:663.5px;top:674.8px;" width="10" height="10" viewBox="0 0 10 10"><path d="M.5 1.200h8.500M2.500 3.400h6.500M2.500 5.600h6.500M.5 7.800h8.500" stroke="#222" stroke-width="1.300"/></svg>
<div class="a" style="left:676.2px;top:671.8px;width:14.6px;height:14.8px;background:#f2f2f2;border:1px solid #fff;border-right:1.300px solid #8a8a8a;border-bottom:1.300px solid #8a8a8a;"></div>
<svg class="a" style="left:681.5px;top:675px;" width="5" height="9" viewBox="0 0 5 9"><path d="M4.400 0v8.400L0 4.200z" fill="#000"/></svg>
<div class="a" style="left:691.3px;top:671.8px;width:48.6px;height:14.8px;background:#efefef;border:1px solid #fff;border-right:1.300px solid #8a8a8a;border-bottom:1.300px solid #8a8a8a;"></div>
<div class="a" style="left:1245px;top:671.8px;width:14.6px;height:14.8px;background:#f2f2f2;border:1px solid #fff;border-right:1.300px solid #8a8a8a;border-bottom:1.300px solid #8a8a8a;"></div>
<svg class="a" style="left:1250.5px;top:675px;" width="5" height="9" viewBox="0 0 5 9"><path d="M0 0v8.400L4.400 4.200z" fill="#000"/></svg>
<div class="a" style="left:1259.6px;top:671.8px;width:15.8px;height:15.2px;background:#f0f0f0;"></div>
<div class="a" style="left:641.3px;top:687px;width:636.4px;height:4.4px;background:linear-gradient(180deg,#f2f4f7 0,#dfeaf6 50%,#a9cceb 80%,#5e9fd8 100%);"></div>
<div class="a" style="left:674.6px;top:442.5px;width:288.6px;height:12.3px;background:#0078d7;"></div>
<div class="a" style="left:674.6px;top:454.7px;width:381px;height:12.2px;background:#0078d7;"></div>
<div class="a" style="left:674.6px;top:466.8px;width:98.5px;height:12.1px;background:#0078d7;"></div>
<div class="a" style="left:0;top:0;width:1259.600px;height:671px;overflow:hidden">
<div class="cl" style="top:125.1px"><span class="k">Option Explicit</span></div>
<div class="cl" style="top:149.5px"><span class="c">'No.005 - 問題</span></div>
<div class="cl" style="top:161.7px"><span class="c">'</span></div>
<div class="cl" style="top:173.9px"><span class="c">'[1]</span></div>
<div class="cl" style="top:186.1px"><span class="c">'シート「元データ」にある表で残業時間が100時間を超えている人の情報を、シート「要注意リスト」に転記しなさい。</span></div>
<div class="cl" style="top:198.3px"><span class="c">'</span></div>
<div class="cl" style="top:210.5px"><span class="c">'</span></div>
<div class="cl" style="top:222.7px"><span class="c">'- - -</span></div>
<div class="cl" style="top:234.9px"><span class="c">'</span></div>
<div class="cl" style="top:247.1px"><span class="c">'ヒント:</span></div>
<div class="cl" style="top:259.3px"><span class="c">'シートを指定して､別のシートのセルに値を書き込むことができる。</span></div>
<div class="cl" style="top:271.5px"><span class="c">'たとえば、以下のマクロを実行すると、シート「要注意リスト」のセルA1に値を書き込める</span></div>
<div class="cl" style="top:283.7px"><span class="c">'</span></div>
<div class="cl" style="top:295.9px"><span class="c">'Worksheets("要注意リスト").Range("A1").Value = "○"</span></div>
<div class="cl" style="top:320.3px"><span class="k">Sub </span><span class="i">mondai1</span>()</div>
<div class="cl" style="top:332.5px">    <span class="k">Dim </span><span class="i">cFm</span><span class="k"> As Long</span></div>
<div class="cl" style="top:344.7px">    <span class="k">Dim </span><span class="i">cTo</span><span class="k"> As Long</span></div>
<div class="cl" style="top:356.9px">    <span class="k">Dim </span><span class="i">wFm</span><span class="k"> As </span><span class="i">Worksheet</span></div>
<div class="cl" style="top:369.1px">    <span class="k">Dim </span><span class="i">wTo</span><span class="k"> As </span><span class="i">Worksheet</span></div>
<div class="cl" style="top:381.3px">    <span class="k">Set </span><span class="i">wFm</span> = <span class="i">Worksheets</span>("元データ")</div>
<div class="cl" style="top:393.5px">    <span class="k">Set </span><span class="i">wTo</span> = <span class="i">Worksheets</span>("要注意リスト")</div>
<div class="cl" style="top:417.9px">    <span class="k">For </span><span class="i">cFm</span> = 4 <span class="k">To</span> 13</div>
<div class="cl" style="top:430.1px">    <span class="k">Next</span></div>
<div class="cl" style="top:442.3px"><span class="s">        If wFm.Range("I4").Value &gt; 100 Then</span></div>
<div class="cl" style="top:454.5px"><span class="s">            wTo.Range("C9").Value = wFm.Range("A4").Value</span></div>
<div class="cl" style="top:466.7px"><span class="s">        End If</span></div>
<div class="cl" style="top:478.9px"><span class="k">End Sub</span></div>
</div>
<span class="a t" style="top:357.74px;font-size:20.4px;line-height:26.52px;color:rgba(18,18,196,.95);font-family:'Liberation Sans','Noto Sans CJK JP',sans-serif;left:542px;transform-origin:0 50%;transform:scaleX(0.968);">www.thundershare.net</span>
<!-- taskbar -->
<div class="a" style="left:0px;top:691.5px;width:1280px;height:28.5px;background:#0c0d10;"></div>
<svg class="a" style="left:9px;top:697.5px;" width="16" height="16" viewBox="0 0 16 16"><path d="M0 2.300l6.500-.9v6.200H0zM7.400 1.300L15.500.100v7.500H7.400zM0 8.500h6.500v6.200L0 13.800zM7.400 8.500h8.100V16l-8.100-1.200z" fill="#fff"/></svg>
<svg class="a" style="left:42.5px;top:697px;" width="17" height="17" viewBox="0 0 17 17"><circle cx="10.300" cy="6.300" r="4.800" fill="none" stroke="#f2f2f2" stroke-width="1.500"/><path d="M6.900 9.800L1 16" stroke="#f2f2f2" stroke-width="1.600"/></svg>
<svg class="a" style="left:74.5px;top:698.5px;" width="20" height="14" viewBox="0 0 20 14"><rect x="4.800" y="1" width="10.400" height="11.600" fill="none" stroke="#f2f2f2" stroke-width="1.400"/><path d="M2.600 2.800H.800v8h1.800M17.400 2.800h1.800v8h-1.800" fill="none" stroke="#f2f2f2" stroke-width="1.300"/></svg>
<svg class="a" style="left:113.5px;top:697.8px;" width="15" height="15" viewBox="0 0 15 15"><circle cx="7.500" cy="7.500" r="7.200" fill="#db4437"/><path d="M7.500 7.500L1.300 3.900A7.200 7.200 0 0 0 7 14.700z" fill="#1da462"/><path d="M7.500 7.500l-0.500 7.200A7.200 7.200 0 0 0 13.800 4z" fill="#ffcd40"/><circle cx="7.500" cy="7.500" r="3.300" fill="#f4f4f4"/><circle cx="7.500" cy="7.500" r="2.500" fill="#4a8af4"/></svg>
<svg class="a" style="left:147.5px;top:698px;" width="16" height="16" viewBox="0 0 16 16"><path d="M0 2l9.500-2v16L0 14z" fill="#d24625"/><rect x="9.500" y="2.500" width="6" height="11" fill="#f7e6e0" stroke="#d24625" stroke-width=".8"/><path d="M11 5.500h3M11 8h3M11 10.500h3" stroke="#d24625" stroke-width="1.100"/></svg>
<span class="a t" style="top:700.36px;font-size:9.3px;line-height:12.09px;color:#fff;font-family:'Liberation Sans','Noto Sans CJK JP',sans-serif;font-weight:bold;left:149.7px;transform-origin:0 50%;">P</span>
<div class="a" style="left:173px;top:691.5px;width:34px;height:28.5px;background:#3b3b3d;"></div>
<div class="a" style="left:173px;top:717.8px;width:34px;height:2.2px;background:#76b9ed;"></div>
<svg class="a" style="left:181.5px;top:698px;" width="17" height="16" viewBox="0 0 17 16"><path d="M0 2l9.500-2v16L0 14z" fill="#1e7145"/><rect x="9.500" y="2.500" width="6.500" height="11" fill="#eef6f0" stroke="#1e7145" stroke-width=".8"/><path d="M11 5h3.500M11 7.200h3.500M11 9.400h3.500M11 11.600h3.500" stroke="#1e7145" stroke-width="1.100"/></svg>
<span class="a t" style="top:700.36px;font-size:9.3px;line-height:12.09px;color:#fff;font-family:'Liberation Sans','Noto Sans CJK JP',sans-serif;font-weight:bold;left:183.5px;transform-origin:0 50%;">X</span>
<svg class="a" style="left:216.5px;top:697.5px;" width="18" height="17" viewBox="0 0 18 17"><path d="M3.200 9.600a5.800 5.800 0 1 1 11.500 1H6.600a3 3 0 0 0 5.200 1.300l2.400 1A5.800 5.800 0 0 1 3.200 9.600z" fill="#39a5dc"/><rect x="6" y="7.600" width="6.500" height="1.600" fill="#0c0d10"/><path d="M1.300 15.300C-1 11 6 3 13 1.400c3-.7 4.300.6 3.200 3" fill="none" stroke="#e9b93a" stroke-width="1.300"/></svg>
<svg class="a" style="left:251.5px;top:698px;" width="17" height="16" viewBox="0 0 17 16"><path d="M0 2l9.500-2v16L0 14z" fill="#0f6cbd"/><rect x="9.500" y="3.500" width="7" height="8.500" fill="#e9f2fb" stroke="#0f6cbd" stroke-width=".8"/><path d="M9.800 4l3.200 3 3.200-3" fill="none" stroke="#0f6cbd" stroke-width="1"/></svg>
<span class="a t" style="top:700.36px;font-size:9.3px;line-height:12.09px;color:#fff;font-family:'Liberation Sans','Noto Sans CJK JP',sans-serif;font-weight:bold;left:252.8px;transform-origin:0 50%;">O</span>
<svg class="a" style="left:285.5px;top:698px;" width="17" height="16" viewBox="0 0 17 16"><path d="M0 2l9.500-2v16L0 14z" fill="#0f78c6"/><path d="M10 4l4.500 4L10 12z" fill="#e9f2fb"/><path d="M12.500 4.500L16 8l-3.500 3.500" fill="none" stroke="#e9f2fb" stroke-width="1.300"/></svg>
<span class="a t" style="top:700.36px;font-size:9.3px;line-height:12.09px;color:#fff;font-family:'Liberation Sans','Noto Sans CJK JP',sans-serif;font-weight:bold;left:287.5px;transform-origin:0 50%;">S</span>
<svg class="a" style="left:320.5px;top:699px;" width="16" height="12" viewBox="0 0 16 12"><path d="M1 8C2 3 8 1 14 2.500C9 3 5 5 4 8.500c2-2 5-2.500 8-2-2 1-3 2-3.500 4" fill="none" stroke="#4a4a4a" stroke-width="1.300"/></svg>
<svg class="a" style="left:355.5px;top:698.5px;" width="17" height="14" viewBox="0 0 17 14"><path d="M.5 1.500h5l1.500 1.800H16v9.700H.500z" fill="#f3d66a"/><path d="M.5 4.600H16" stroke="#e2bd45" stroke-width="1"/><rect x="4.500" y="7.500" width="8" height="5.500" fill="#4aa8e0"/><rect x="6.800" y="10" width="3.400" height="3" fill="#f3d66a"/></svg>
<div class="a" style="left:350px;top:717.8px;width:27px;height:2.2px;background:#76b9ed;"></div>
<svg class="a" style="left:389.5px;top:698px;" width="17" height="17" viewBox="0 0 17 17"><circle cx="8.500" cy="8.500" r="8" fill="#2f86cf"/><circle cx="8.500" cy="8.500" r="6.600" fill="none" stroke="#9fd0f4" stroke-width=".9"/></svg>
<span class="a t" style="top:699.77px;font-size:10.5px;line-height:13.65px;color:#fff;font-family:'Liberation Sans','Noto Sans CJK JP',sans-serif;font-weight:bold;left:394px;transform-origin:0 50%;font-style:italic;">N</span>
<svg class="a" style="left:426px;top:699px;" width="14" height="13" viewBox="0 0 14 13"><rect x="0" y="0" width="13.500" height="12.500" fill="#fdfdfd"/><path d="M8 12.500h5.500V7z" fill="#0c0d10"/></svg>
<div class="a" style="left:420px;top:717.8px;width:26.5px;height:2.2px;background:#76b9ed;"></div>
<svg class="a" style="left:459.5px;top:698px;" width="16" height="16" viewBox="0 0 16 16"><rect x="1.500" y="1.500" width="11.500" height="13.500" fill="#f3f5f8" stroke="#9aa3b3" stroke-width=".9"/><path d="M3.500 5h7.500M3.500 7.300h7.500M3.500 9.600h7.500M3.500 11.900h5" stroke="#b9c2d0" stroke-width=".9"/><path d="M12.500 1l2 1.500-5.500 10-2 .8.200-2.300z" fill="#e2a33a" stroke="#7a5a1a" stroke-width=".6"/><path d="M1.500 1.500h11.500" stroke="#c63a3a" stroke-width="1.600"/></svg>
<div class="a" style="left:454px;top:717.8px;width:27px;height:2.2px;background:#76b9ed;"></div>
<svg class="a" style="left:1059.5px;top:697.5px;" width="15" height="16" viewBox="0 0 15 16"><circle cx="9.700" cy="3.800" r="2.700" fill="none" stroke="#eee" stroke-width="1.200"/><path d="M6.500 9.500c1.600-3 5.400-3 6.800.6" fill="none" stroke="#eee" stroke-width="1.200"/><circle cx="4.500" cy="9" r="2.200" fill="none" stroke="#eee" stroke-width="1.200"/><path d="M1 15c.5-4.200 6.400-4.200 7 0" fill="none" stroke="#eee" stroke-width="1.200"/></svg>
<svg class="a" style="left:1088.5px;top:702px;" width="13" height="8" viewBox="0 0 13 8"><path d="M1 7l5.300-5.500L11.600 7" fill="none" stroke="#eee" stroke-width="1.400"/></svg>
<svg class="a" style="left:1108.5px;top:699.5px;" width="17" height="12" viewBox="0 0 17 12"><rect x="4.300" y="3.300" width="11" height="7" fill="#e8e8e8" stroke="#eee" stroke-width="1"/><rect x="15.600" y="5.300" width="1.200" height="3" fill="#eee"/><path d="M2.300 .3v2.500M4.300 .3v2.500M1.300 2.800h4v2.200l-1.500 1.300V10" fill="none" stroke="#eee" stroke-width="1"/></svg>
<svg class="a" style="left:1131.5px;top:699.5px;" width="17" height="13" viewBox="0 0 17 13"><path d="M6 12.500A6.800 6.800 0 0 1 13 5.500M6.300 9.500A6 6 0 0 1 14 3M9 12.500a3.500 3.500 0 0 1 4-3.600" fill="none" stroke="#ddd" stroke-width="1.300"/><circle cx="13.300" cy="11.500" r="1.300" fill="#eee"/><path d="M4.500 5.500l4.300 7H.2z" fill="#f2b52a"/><path d="M4.500 8v2.600" stroke="#222" stroke-width="1"/></svg>
<svg class="a" style="left:1153.5px;top:699.5px;" width="16" height="13" viewBox="0 0 16 13"><path d="M.8 4.300h2.400L6.800 1v11L3.200 8.700H.800z" fill="none" stroke="#eee" stroke-width="1.200"/><path d="M9.600 4.300l4.400 4.400M14 4.300L9.600 8.700" stroke="#eee" stroke-width="1.300"/></svg>
<span class="a t" style="top:695.47px;font-size:18.2px;line-height:23.66px;color:#eee;font-family:'Liberation Sans','Noto Sans CJK JP',sans-serif;left:1177.8px;transform-origin:0 50%;transform:scaleX(0.9583);">A</span>
<span class="a t" style="top:699.28px;font-size:10.8px;line-height:14.04px;color:#f0f0f0;font-family:'Liberation Sans','Noto Sans CJK JP',sans-serif;left:1200px;transform-origin:0 50%;transform:scaleX(0.9444);">16:00</span>
<svg class="a" style="left:1240.5px;top:697.5px;" width="17" height="17" viewBox="0 0 17 17"><path d="M.8 .8h15v11.200h-5.800l-1.700 2.300-1.700-2.300H.800z" fill="#f6f6f6"/><path d="M3.300 3.800h10M3.300 6.300h10M3.300 8.800h6" stroke="#0c0d10" stroke-width="1.200"/></svg>
<div class="a" style="left:1275.2px;top:691.4px;width:1px;height:28.6px;background:#4a4a4a;"></div>
</div>
</body>
</html>
